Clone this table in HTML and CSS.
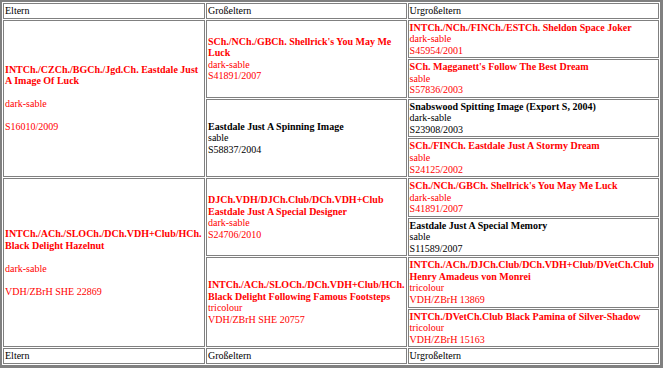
FILE: index.html
```html
<!DOCTYPE html>
<html lang="de">
<head>
<meta charset="utf-8">
<title>Ahnentafel</title>
<link rel="stylesheet" href="styles.css">
</head>
<body>
<table class="pedigree">
  <colgroup>
    <col class="c-parent">
    <col class="c-grand">
    <col class="c-great">
  </colgroup>
  <tr>
    <td>Eltern</td>
    <td>Großeltern</td>
    <td>Urgroßeltern</td>
  </tr>
  <tr>
    <td rowspan="4" class="champ"><b>INTCh./CZCh./BGCh./Jgd.Ch. Eastdale Just A Image Of Luck</b><br><br>dark-sable<br><br>S16010/2009</td>
    <td rowspan="2" class="champ"><b>SCh./NCh./GBCh. Shellrick's You May Me Luck</b><br>dark-sable<br>S41891/2007</td>
    <td class="champ"><b>INTCh./NCh./FINCh./ESTCh. Sheldon Space Joker</b><br>dark-sable<br>S45954/2001</td>
  </tr>
  <tr>
    <td class="champ"><b>SCh. Magganett's Follow The Best Dream</b><br>sable<br>S57836/2003</td>
  </tr>
  <tr>
    <td rowspan="2"><b>Eastdale Just A Spinning Image</b><br>sable<br>S58837/2004</td>
    <td><b>Snabswood Spitting Image (Export S, 2004)</b><br>dark-sable<br>S23908/2003</td>
  </tr>
  <tr>
    <td class="champ"><b>SCh./FINCh. Eastdale Just A Stormy Dream</b><br>sable<br>S24125/2002</td>
  </tr>
  <tr>
    <td rowspan="4" class="champ"><b>INTCh./ACh./SLOCh./DCh.VDH+Club/HCh. Black Delight Hazelnut</b><br><br>dark-sable<br><br>VDH/ZBrH SHE 22869</td>
    <td rowspan="2" class="champ"><b>DJCh.VDH/DJCh.Club/DCh.VDH+Club Eastdale Just A Special Designer</b><br>dark-sable<br>S24706/2010</td>
    <td class="champ"><b>SCh./NCh./GBCh. Shellrick's You May Me Luck</b><br>dark-sable<br>S41891/2007</td>
  </tr>
  <tr>
    <td><b>Eastdale Just A Special Memory</b><br>sable<br>S11589/2007</td>
  </tr>
  <tr>
    <td rowspan="2" class="champ"><b>INTCh./ACh./SLOCh./DCh.VDH+Club/HCh. Black Delight Following Famous Footsteps</b><br>tricolour<br>VDH/ZBrH SHE 20757</td>
    <td class="champ"><b>INTCh./ACh./DJCh.Club/DCh.VDH+Club/DVetCh.Club Henry Amadeus von Monrei</b><br>tricolour<br>VDH/ZBrH 13869</td>
  </tr>
  <tr>
    <td class="champ"><b>INTCh./DVetCh.Club Black Pamina of Silver-Shadow</b><br>tricolour<br>VDH/ZBrH 15163</td>
  </tr>
  <tr>
    <td>Eltern</td>
    <td>Großeltern</td>
    <td>Urgroßeltern</td>
  </tr>
</table>
</body>
</html>
```

FILE: styles.css
```css
html, body {
  margin: 0;
  padding: 0;
  background: #ffffff;
}

.pedigree {
  width: 663px;
  border: 2px solid #808080;
  border-right-width: 3px;
  border-bottom-width: 3px;
  border-spacing: 1px;
  background: #ffffff;
  font-family: "Liberation Serif", "Times New Roman", serif;
  font-size: 10px;
  line-height: 11.55px;
  color: #000000;
}

.pedigree td {
  border: 1px solid #808080;
  padding: 1px;
  vertical-align: middle;
  text-align: left;
}

.c-parent { width: 202px; }
.c-grand { width: 199px; }

/* titled dogs are printed in red */
.champ {
  color: #ff0000;
}
```
